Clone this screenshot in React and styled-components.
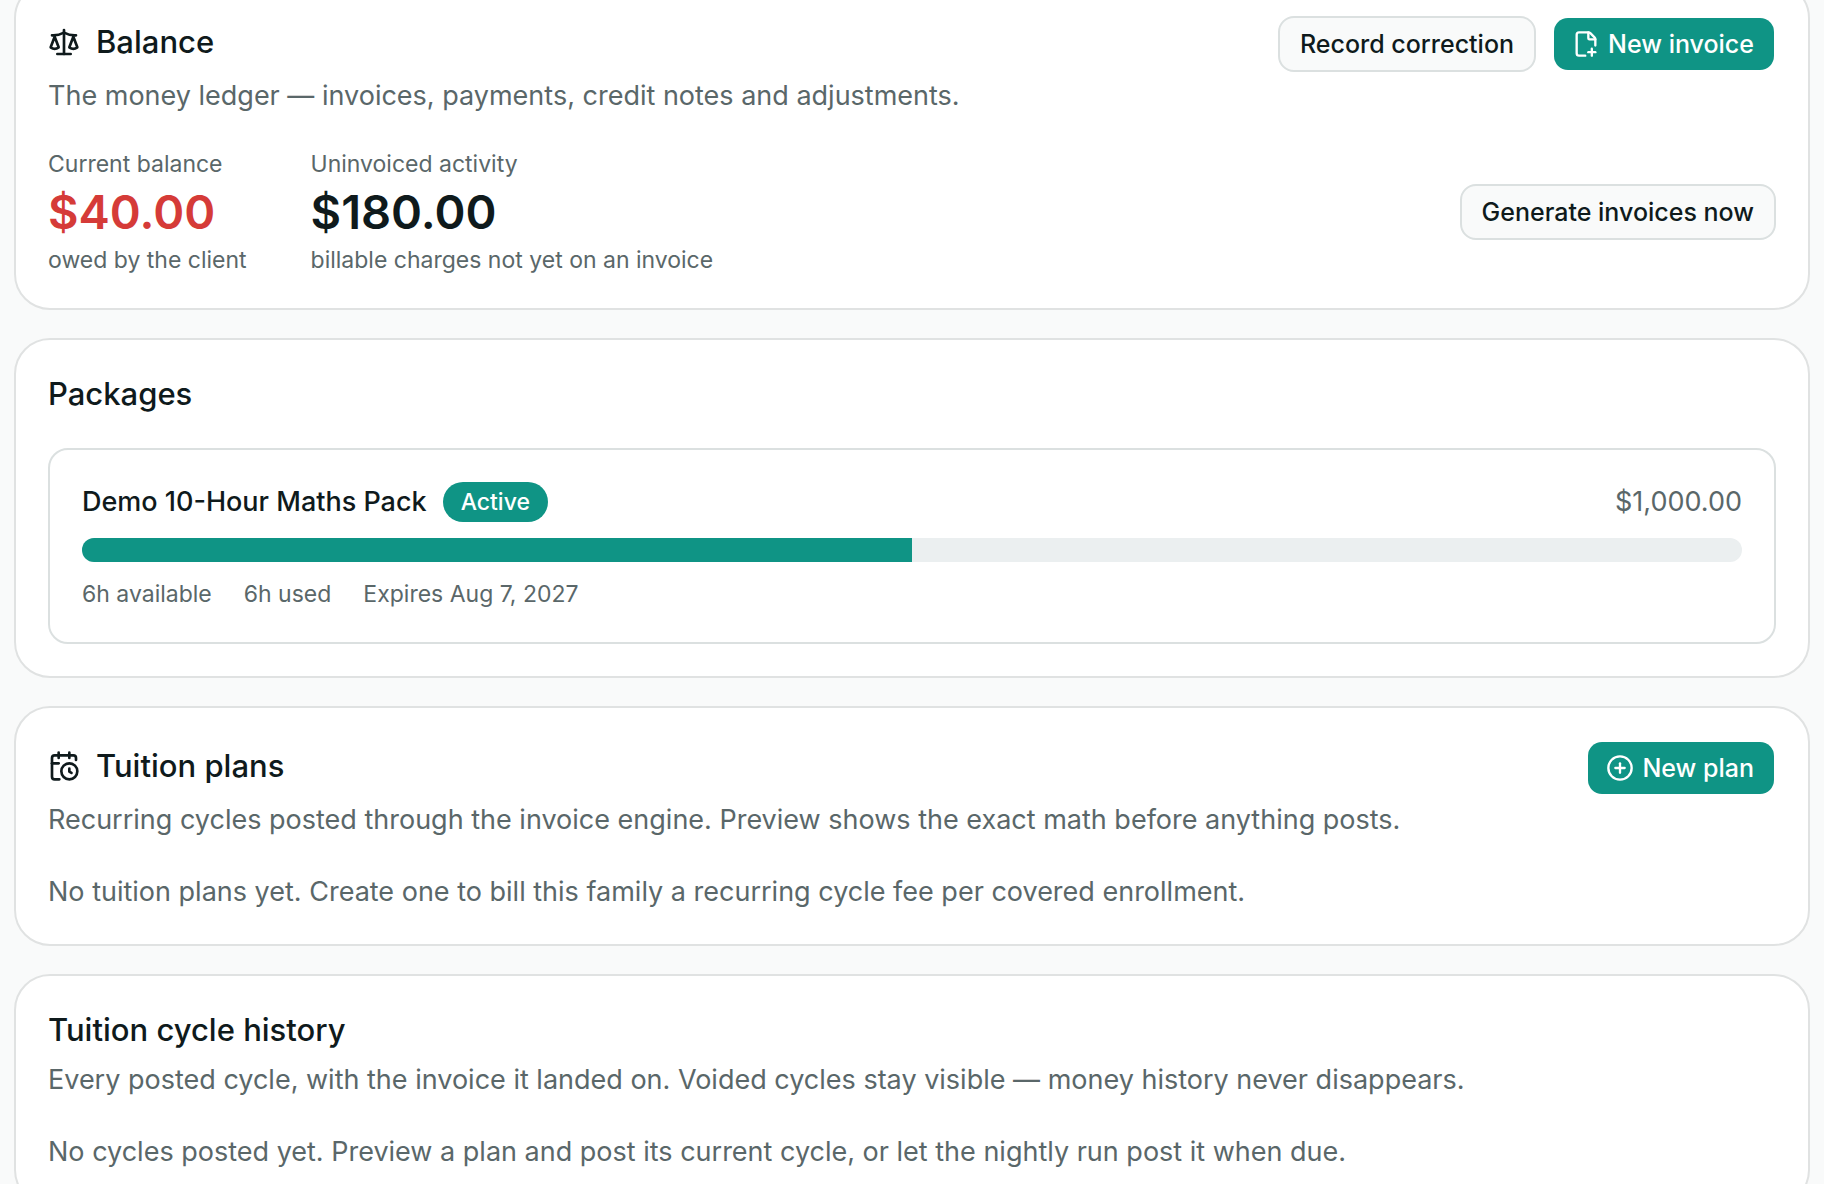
import React from "react";
import styled, { createGlobalStyle } from "styled-components";
import { Scale, FilePlus2, CalendarClock, CirclePlus } from "lucide-react";

const font = `Inter, "Liberation Sans", sans-serif`;

const GlobalStyle = createGlobalStyle`
  *, *::before, *::after { box-sizing: border-box; }
  body { margin: 0; background: #f9fafa; color: #0f1a1c; font-family: ${font}; font-size: 27px; line-height: 40px; }
  h2, h3, p, dl, dt, dd, ul { margin: 0; padding: 0; }
`;

const Page = styled.main`
  display: flex;
  flex-direction: column;
  gap: 28px;
  height: 100vh;
  padding: 0 14px;
  overflow: auto;
  scrollbar-width: none;
`;

const Card = styled.section`
  flex: none;
  display: flex;
  flex-direction: column;
  gap: 32px;
  padding: 32px;
  background: #fff;
  border: 2px solid #e0e2e2;
  border-radius: 36px;
  &:first-child { margin-top: -18px; }
`;

const CardHeader = styled.header`
  display: flex;
  justify-content: space-between;
  align-items: flex-start;
  gap: 24px;
`;

const Heading = styled.div`
  display: flex;
  flex-direction: column;
  gap: 8px;
`;

const Title = styled.h2`
  display: flex;
  align-items: center;
  gap: 16px;
  font-size: 31px;
  font-weight: 500;
  line-height: ${(p) => (p.$withIcon ? 52 : 44)}px;
`;

const Muted = styled.p`
  color: #5a6769;
`;

const Actions = styled.div`
  display: flex;
  align-items: center;
  gap: 16px;
`;

const Button = styled.button`
  display: inline-flex;
  align-items: center;
  gap: 8px;
  height: 56px;
  padding: 0 20px;
  border: 2px solid #dbe0e0;
  border-radius: 16px;
  background: #f9fafa;
  color: #0f1a1c;
  font: 500 25px/36px ${font};
  white-space: nowrap;
`;

const PrimaryButton = styled(Button)`
  padding-left: 18px;
  border-color: transparent;
  background: #0f9485;
  background-clip: padding-box;
  color: #fff;
`;

const BalanceRow = styled.div`
  display: flex;
  align-items: center;
  justify-content: space-between;
`;

const Stats = styled.dl`
  display: flex;
  gap: 64px;
`;

const Stat = styled.div`
  font-size: 23px;
  line-height: 32px;
  color: #5a6769;
`;

const Amount = styled.dd`
  font-size: 47px;
  line-height: 64px;
  font-weight: 600;
  color: ${(p) => (p.$owed ? "#d53b38" : "#0f1a1c")};
`;

const PackageItem = styled.article`
  display: flex;
  flex-direction: column;
  gap: 16px;
  padding: 32px;
  border: 2px solid #dbe0e0;
  border-radius: 20px;
`;

const PackageTop = styled.div`
  display: flex;
  align-items: center;
  justify-content: space-between;
`;

const PackageName = styled.h3`
  display: flex;
  align-items: center;
  gap: 16px;
  font-size: 27px;
  font-weight: 500;
`;

const Badge = styled.span`
  padding: 0 18px;
  border-radius: 20px;
  background: #0f9485;
  color: #fff;
  font-size: 23px;
  line-height: 40px;
`;

const Track = styled.div`
  height: 24px;
  border-radius: 12px;
  background: #ebeff0;
  overflow: hidden;
`;

const Fill = styled.div`
  height: 100%;
  background: #0f9485;
`;

const Facts = styled.ul`
  display: flex;
  gap: 32px;
  list-style: none;
  color: #5a6769;
  font-size: 23px;
  line-height: 32px;
`;

const pack = { name: "Demo 10-Hour Maths Pack", price: "$1,000.00", available: 6, used: 6 };

export default function App() {
  const share = (pack.used / (pack.used + pack.available)) * 100;
  return (
    <>
      <GlobalStyle />
      <Page>
        <Card>
          <CardHeader>
            <Heading>
              <Title $withIcon><Scale size={32} />Balance</Title>
              <Muted>The money ledger — invoices, payments, credit notes and adjustments.</Muted>
            </Heading>
            <Actions>
              <Button type="button">Record correction</Button>
              <PrimaryButton type="button"><FilePlus2 size={28} />New invoice</PrimaryButton>
            </Actions>
          </CardHeader>
          <BalanceRow>
            <Stats>
              <Stat>
                <dt>Current balance</dt>
                <Amount $owed>$40.00</Amount>
                <dd>owed by the client</dd>
              </Stat>
              <Stat>
                <dt>Uninvoiced activity</dt>
                <Amount>$180.00</Amount>
                <dd>billable charges not yet on an invoice</dd>
              </Stat>
            </Stats>
            <Button type="button">Generate invoices now</Button>
          </BalanceRow>
        </Card>

        <Card>
          <Title>Packages</Title>
          <PackageItem>
            <PackageTop>
              <PackageName>{pack.name}<Badge>Active</Badge></PackageName>
              <Muted>{pack.price}</Muted>
            </PackageTop>
            <Track role="progressbar" aria-label="Hours used" aria-valuenow={share}>
              <Fill style={{ width: `${share}%` }} />
            </Track>
            <Facts>
              <li>{pack.available}h available</li>
              <li>{pack.used}h used</li>
              <li>Expires Aug 7, 2027</li>
            </Facts>
          </PackageItem>
        </Card>

        <Card>
          <CardHeader>
            <Heading>
              <Title $withIcon><CalendarClock size={32} />Tuition plans</Title>
              <Muted>Recurring cycles posted through the invoice engine. Preview shows the exact math before anything posts.</Muted>
            </Heading>
            <PrimaryButton type="button"><CirclePlus size={28} />New plan</PrimaryButton>
          </CardHeader>
          <Muted>No tuition plans yet. Create one to bill this family a recurring cycle fee per covered enrollment.</Muted>
        </Card>

        <Card>
          <Heading>
            <Title>Tuition cycle history</Title>
            <Muted>Every posted cycle, with the invoice it landed on. Voided cycles stay visible — money history never disappears.</Muted>
          </Heading>
          <Muted>No cycles posted yet. Preview a plan and post its current cycle, or let the nightly run post it when due.</Muted>
        </Card>
      </Page>
    </>
  );
}
